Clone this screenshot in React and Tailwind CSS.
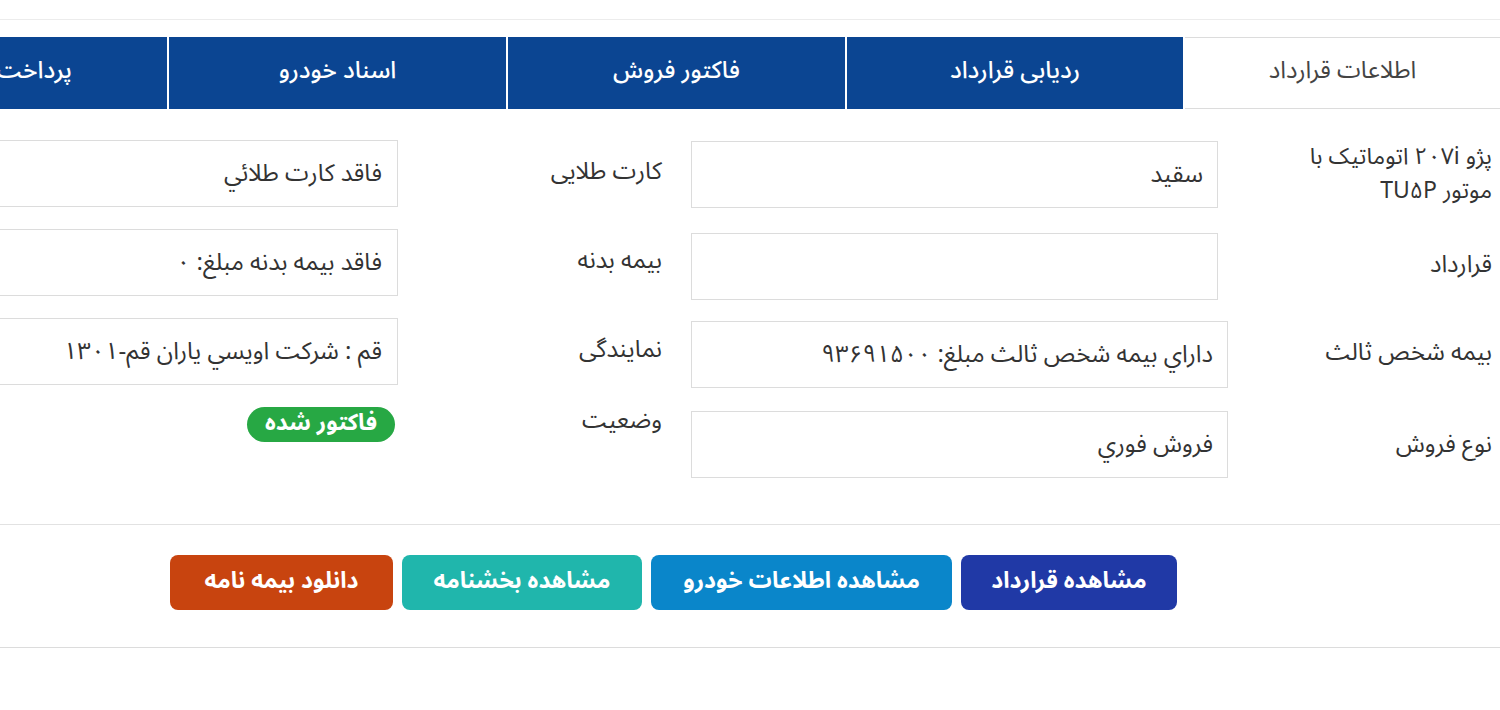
import React from "react";

const FONT = {
  fontFamily: '"Noto Sans Arabic", "Vazirmatn", "DejaVu Sans", "Noto Sans", sans-serif',
};

function Tab({ children, active, width }) {
  if (active) {
    return (
      <div
        className="shrink-0 h-full flex items-center justify-center bg-white border-y border-[#dcdcdc] text-[#444] text-[24px] pb-[4px]"
        style={{ width }}
      >
        {children}
      </div>
    );
  }
  return (
    <div
      className="shrink-0 h-full flex items-center justify-center bg-[#0b4592] text-white text-[24px] font-medium pb-[4px]"
      style={{ width }}
    >
      {children}
    </div>
  );
}

function Box({ children, className = "" }) {
  return (
    <div
      className={
        "h-[67px] border border-[#dcdcdc] bg-white flex items-center pr-[14px] text-[24px] text-[#333] whitespace-nowrap overflow-hidden " +
        className
      }
    >
      {children}
    </div>
  );
}

export default function App() {
  return (
    <div dir="rtl" className="w-[1500px] h-[710px] overflow-hidden bg-white relative" style={FONT}>
      <div className="h-[20px] border-b border-[#ececec]" />
      <div className="mt-[17px] h-[72px] flex gap-[2px]">
        <Tab active width="315px">اطلاعات قرارداد</Tab>
        <Tab width="336px">ردیابی قرارداد</Tab>
        <Tab width="337px">فاکتور فروش</Tab>
        <Tab width="337px">اسناد خودرو</Tab>
        <Tab width="337px">پرداخت اقساط</Tab>
      </div>

      <div className="mt-[31px] flex flex-col gap-[22px]">
        {/* row 1 */}
        <div className="flex h-[67px]">
          <div className="w-[272px] shrink-0 flex items-center pr-[8px] text-[23px] text-[#333] leading-[34px] mt-[1px]">
            <div>
              پژو ۲۰۷i اتوماتیک با
              <br />
              موتور TU۵P
            </div>
          </div>
          <div className="w-[537px] shrink-0 pr-[10px] mt-[1px]">
            <Box>سقید</Box>
          </div>
          <div className="w-[293px] shrink-0 flex items-center pr-[29px] text-[24px] text-[#333] -mt-[4px]">
            کارت طلایی
          </div>
          <div className="w-[420px] shrink-0">
            <Box className="pr-[15px]">فاقد کارت طلائي</Box>
          </div>
        </div>

        {/* row 2 */}
        <div className="flex h-[67px]">
          <div className="w-[272px] shrink-0 flex items-center pr-[8px] text-[24px] text-[#333] mt-[4px]">
            قرارداد
          </div>
          <div className="w-[537px] shrink-0 pr-[10px] mt-[4px]">
            <Box />
          </div>
          <div className="w-[293px] shrink-0 flex items-center pr-[29px] text-[24px] text-[#333] -mt-[4px]">
            بیمه بدنه
          </div>
          <div className="w-[420px] shrink-0">
            <Box className="pr-[15px]">فاقد بیمه بدنه مبلغ: ۰</Box>
          </div>
        </div>

        {/* row 3 */}
        <div className="flex h-[67px]">
          <div className="w-[272px] shrink-0 flex items-center pr-[8px] text-[24px] text-[#333] mt-[3px]">
            بیمه شخص ثالث
          </div>
          <div className="w-[537px] shrink-0 mt-[3px]">
            <Box>داراي بیمه شخص ثالث مبلغ: ۹۳۶۹۱۵۰۰</Box>
          </div>
          <div className="w-[293px] shrink-0 flex items-center pr-[29px] text-[24px] text-[#333] -mt-[4px]">
            نمایندگی
          </div>
          <div className="w-[420px] shrink-0">
            <Box className="pr-[15px]">قم : شرکت اویسي یاران قم-۱۳۰۱</Box>
          </div>
        </div>

        {/* row 4 */}
        <div className="flex h-[71px] items-start">
          <div className="w-[272px] shrink-0 h-[67px] flex items-center pr-[8px] text-[24px] text-[#333] mt-[4px]">
            نوع فروش
          </div>
          <div className="w-[537px] shrink-0 mt-[4px]">
            <Box>فروش فوري</Box>
          </div>
          <div className="w-[293px] shrink-0 h-[35px] flex items-center pr-[29px] text-[24px] text-[#333] -mt-[4px]">
            وضعیت
          </div>
          <div className="w-[420px] shrink-0 pr-[3px]">
            <span className="inline-flex items-center justify-center h-[35px] w-[148px] rounded-full bg-[#27a844] text-white text-[23px] font-bold pb-[3px]">
              فاکتور شده
            </span>
          </div>
        </div>
      </div>

      <div className="mt-[46px] border-t border-[#e2e2e2]" />

      <div className="mt-[30px] flex gap-[9px] pr-[323px]">
        <button className="w-[216px] h-[55px] rounded-[8px] bg-[#2039a6] text-white text-[23px] font-bold pb-[3px]">
          مشاهده قرارداد
        </button>
        <button className="w-[301px] h-[55px] rounded-[8px] bg-[#0a86ca] text-white text-[23px] font-bold pb-[3px]">
          مشاهده اطلاعات خودرو
        </button>
        <button className="w-[240px] h-[55px] rounded-[8px] bg-[#20b6ac] text-white text-[23px] font-bold pb-[3px]">
          مشاهده بخشنامه
        </button>
        <button className="w-[223px] h-[55px] rounded-[8px] bg-[#c8440f] text-white text-[23px] font-bold pb-[3px]">
          دانلود بیمه نامه
        </button>
      </div>

      <div className="mt-[37px] border-t border-[#dcdcdc]" />
    </div>
  );
}
